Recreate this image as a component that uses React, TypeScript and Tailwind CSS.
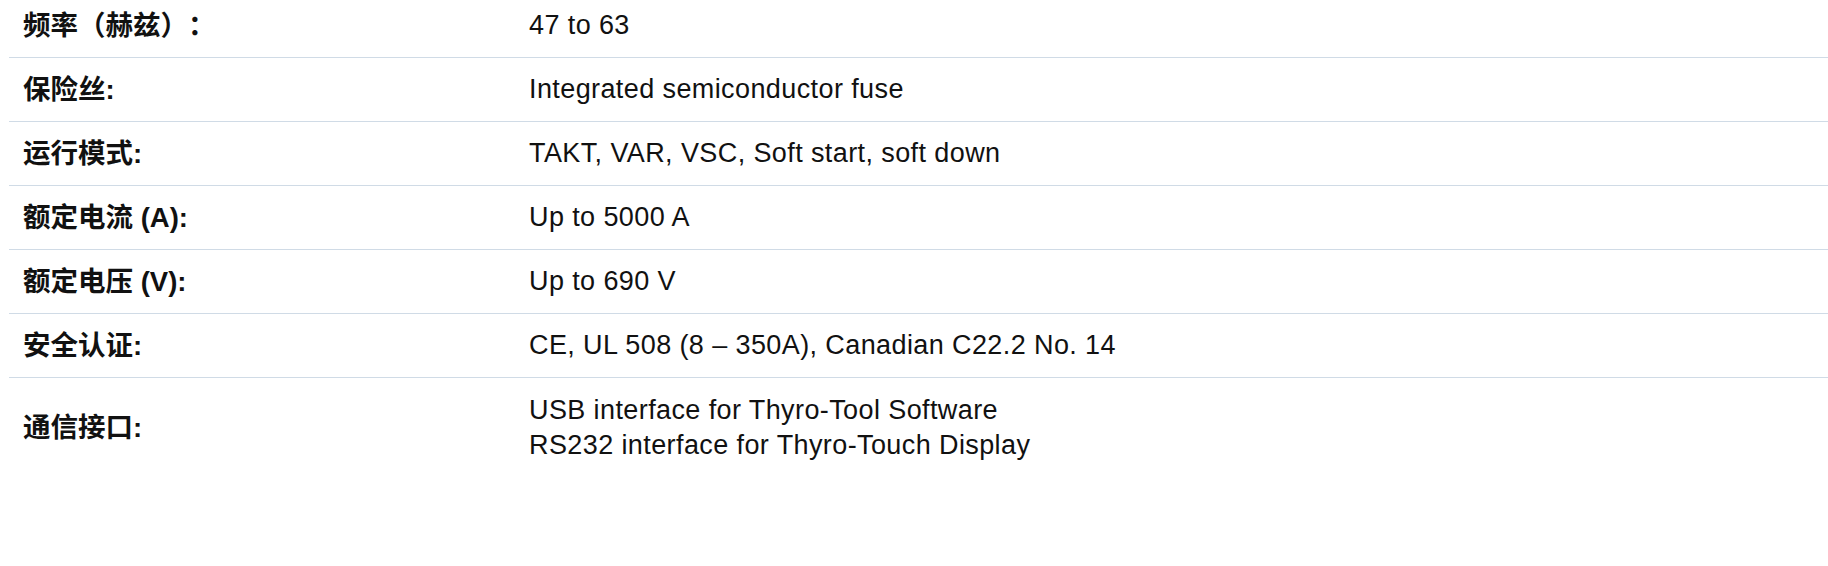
import React from "react";

const rows: { label: string; value: string[]; labelClass?: string }[] = [
  {
    label: "频率（赫兹）：",
    value: ["47 to 63"],
    labelClass: "[text-spacing-trim:space-all]",
  },
  { label: "保险丝:", value: ["Integrated semiconductor fuse"] },
  { label: "运行模式:", value: ["TAKT, VAR, VSC, Soft start, soft down"] },
  { label: "额定电流 (A):", value: ["Up to 5000 A"] },
  { label: "额定电压 (V):", value: ["Up to 690 V"] },
  { label: "安全认证:", value: ["CE, UL 508 (8 – 350A), Canadian C22.2 No. 14"] },
  {
    label: "通信接口:",
    value: ["USB interface for Thyro-Tool Software", "RS232 interface for Thyro-Touch Display"],
  },
];

export default function App() {
  return (
    <div
      className="w-[1828px] h-[566px] overflow-hidden bg-white text-[#111]"
      style={{ fontFamily: '"Liberation Sans", Arial, "Noto Sans CJK SC", sans-serif' }}
    >
      <div className="pl-[9px] -mt-[6px]">
        {rows.map((r, i) => (
          <div
            key={i}
            className={
              "flex items-center " +
              (i < rows.length - 1 ? "h-[64px] border-b border-[#d0dbe6]" : "h-[100px]")
            }
          >
            <div
              className={
                "w-[520px] shrink-0 pl-[14px] font-bold text-[27.5px] text-[#111] " +
                (r.labelClass ?? "")
              }
            >
              {r.label}
            </div>
            <div className="flex flex-col text-[27px] tracking-[0.4px] leading-[35px] text-[#111]">
              {r.value.map((v, j) => (
                <div key={j}>{v}</div>
              ))}
            </div>
          </div>
        ))}
      </div>
    </div>
  );
}
